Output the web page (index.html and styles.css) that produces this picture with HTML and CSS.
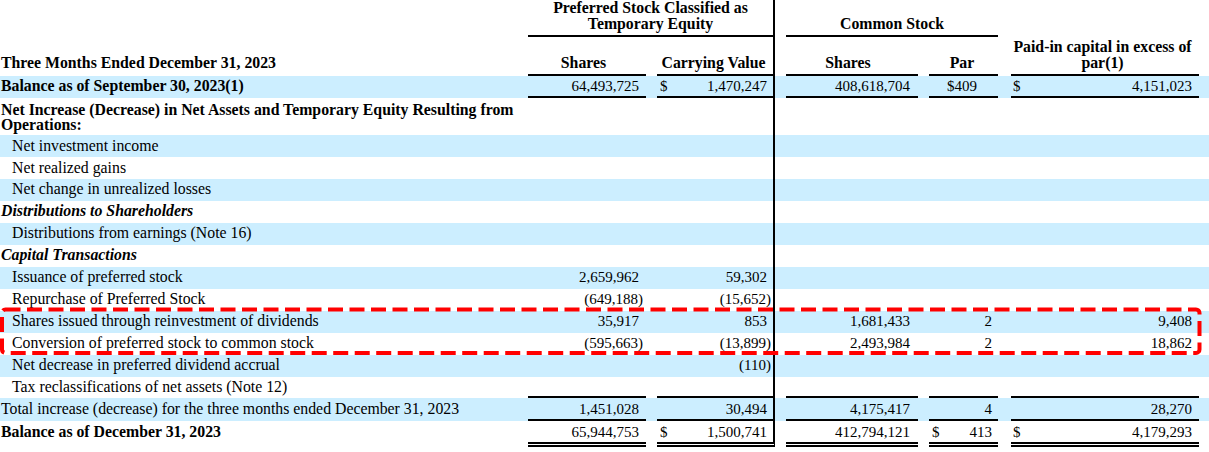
FILE: index.html
```html
<!DOCTYPE html>
<html lang="en">
<head>
<meta charset="utf-8">
<title>Statement of Changes in Net Assets</title>
<link rel="stylesheet" href="styles.css">
</head>
<body>
<div class="sheet">
  <div class="row hrow1">
    <div class="lbl"></div>
    <div class="h pref">Preferred Stock Classified as<br>Temporary Equity</div>
    <div class="h cs">Common Stock</div>
    <div class="c5 blank"></div>
  </div>
  <div class="row hrow2">
    <div class="h lbl hl-lbl">Three Months Ended December 31, 2023</div>
    <div class="h c1 ul">Shares</div>
    <div class="h c2 ul">Carrying Value</div>
    <div class="h c3 ul">Shares</div>
    <div class="h c4 ul">Par</div>
    <div class="h c5 ul">Paid-in capital in excess of<br>par(1)</div>
  </div>

  <div class="row alt">
    <div class="lbl b">Balance as of September 30, 2023(1)</div>
    <div class="c1 ul">64,493,725</div>
    <div class="c2 ul dol"><span>$</span><span>1,470,247</span></div>
    <div class="c3 ul">408,618,704</div>
    <div class="c4 ul ctr">$409</div>
    <div class="c5 ul dol"><span>$</span><span>4,151,023</span></div>
  </div>
  <div class="row">
    <div class="lbl b two">Net Increase (Decrease) in Net Assets and Temporary Equity Resulting from Operations:</div>
    <div class="c1"></div><div class="c2"></div><div class="c3"></div><div class="c4"></div><div class="c5"></div>
  </div>
  <div class="row alt">
    <div class="lbl ind">Net investment income</div>
    <div class="c1"></div><div class="c2"></div><div class="c3"></div><div class="c4"></div><div class="c5"></div>
  </div>
  <div class="row">
    <div class="lbl ind">Net realized gains</div>
    <div class="c1"></div><div class="c2"></div><div class="c3"></div><div class="c4"></div><div class="c5"></div>
  </div>
  <div class="row alt">
    <div class="lbl ind">Net change in unrealized losses</div>
    <div class="c1"></div><div class="c2"></div><div class="c3"></div><div class="c4"></div><div class="c5"></div>
  </div>
  <div class="row">
    <div class="lbl bi">Distributions to Shareholders</div>
    <div class="c1"></div><div class="c2"></div><div class="c3"></div><div class="c4"></div><div class="c5"></div>
  </div>
  <div class="row alt">
    <div class="lbl ind">Distributions from earnings (Note 16)</div>
    <div class="c1"></div><div class="c2"></div><div class="c3"></div><div class="c4"></div><div class="c5"></div>
  </div>
  <div class="row">
    <div class="lbl bi">Capital Transactions</div>
    <div class="c1"></div><div class="c2"></div><div class="c3"></div><div class="c4"></div><div class="c5"></div>
  </div>
  <div class="row alt">
    <div class="lbl ind">Issuance of preferred stock</div>
    <div class="c1">2,659,962</div>
    <div class="c2">59,302</div>
    <div class="c3"></div><div class="c4"></div><div class="c5"></div>
  </div>
  <div class="row">
    <div class="lbl ind">Repurchase of Preferred Stock</div>
    <div class="c1"><span class="neg">(649,188)</span></div>
    <div class="c2"><span class="neg">(15,652)</span></div>
    <div class="c3"></div><div class="c4"></div><div class="c5"></div>
  </div>

  <div class="highlight">
    <div class="row alt">
      <div class="lbl ind">Shares issued through reinvestment of dividends</div>
      <div class="c1">35,917</div>
      <div class="c2">853</div>
      <div class="c3">1,681,433</div>
      <div class="c4">2</div>
      <div class="c5">9,408</div>
    </div>
    <div class="row">
      <div class="lbl ind">Conversion of preferred stock to common stock</div>
      <div class="c1"><span class="neg">(595,663)</span></div>
      <div class="c2"><span class="neg">(13,899)</span></div>
      <div class="c3">2,493,984</div>
      <div class="c4">2</div>
      <div class="c5">18,862</div>
    </div>
    <svg class="hl-box" width="1209" height="58" viewBox="0 0 1209 58" aria-hidden="true">
      <rect x="2" y="4.4" width="1197.5" height="43.5" rx="3.5" ry="3.5" fill="none" stroke="#ff0000" stroke-width="4" stroke-dasharray="15 6.5"/>
    </svg>
  </div>

  <div class="row alt">
    <div class="lbl ind">Net decrease in preferred dividend accrual</div>
    <div class="c1"></div>
    <div class="c2"><span class="neg">(110)</span></div>
    <div class="c3"></div><div class="c4"></div><div class="c5"></div>
  </div>
  <div class="row">
    <div class="lbl ind">Tax reclassifications of net assets (Note 12)</div>
    <div class="c1 ul"></div><div class="c2 ul"></div><div class="c3 ul"></div><div class="c4 ul"></div><div class="c5 ul"></div>
  </div>
  <div class="row alt">
    <div class="lbl">Total increase (decrease) for the three months ended December 31, 2023</div>
    <div class="c1 ul">1,451,028</div>
    <div class="c2 ul">30,494</div>
    <div class="c3 ul">4,175,417</div>
    <div class="c4 ul">4</div>
    <div class="c5 ul">28,270</div>
  </div>
  <div class="row">
    <div class="lbl b">Balance as of December 31, 2023</div>
    <div class="c1 dul">65,944,753</div>
    <div class="c2 dul dol"><span>$</span><span>1,500,741</span></div>
    <div class="c3 dul">412,794,121</div>
    <div class="c4 dul dol"><span>$</span><span>413</span></div>
    <div class="c5 dul dol"><span>$</span><span>4,179,293</span></div>
  </div>
</div>
</body>
</html>
```

FILE: styles.css
```css
* {
  box-sizing: border-box;
}

html,
body {
  margin: 0;
  padding: 0;
  background: #ffffff;
}

body {
  font-family: "Liberation Serif", "Times New Roman", serif;
  color: #000000;
}

.sheet {
  width: 1209px;
}

.row {
  display: grid;
  grid-template-columns: 528px 118px 129px 143px 80px 201px 1fr;
  font-size: 15.8px;
  line-height: 14.6px;
}

.row.alt {
  background: #cceeff;
}

/* label column */
.lbl {
  padding: 3.7px 0 3.7px 1px;
}

.lbl.ind {
  padding-left: 12px;
}

.lbl.two {
  line-height: 15px;
  padding-top: 3.3px;
  padding-bottom: 3.3px;
}

.b {
  font-weight: bold;
}

.bi {
  font-weight: bold;
  font-style: italic;
}

/* numeric columns */
.c1,
.c2,
.c3,
.c4,
.c5 {
  font-size: 15px;
  text-align: right;
  white-space: nowrap;
}

.c1 {
  padding: 3.7px 7px 3.7px 0;
}

.c2 {
  margin-left: 11px;
  border-right: 2px solid #000000;
  padding: 3.7px 6px 3.7px 3px;
}

.c3 {
  margin-left: 11px;
  padding: 3.7px 8px 3.7px 0;
}

.c4 {
  margin-left: 11px;
  padding: 3.7px 6px 3.7px 3px;
}

.c5 {
  margin-left: 13px;
  padding: 3.7px 7px 3.7px 2px;
}

.ul {
  border-bottom: 2px solid #000000;
  padding-bottom: 2.4px;
}

.dul {
  border-bottom: 5px double #000000;
  padding-bottom: 2.4px;
}

.dol {
  display: flex;
  justify-content: space-between;
  align-items: baseline;
}

.ctr {
  text-align: center;
}

.neg {
  margin-right: -4px;
}

/* header rows */
.h {
  font-size: 15.8px;
  font-weight: bold;
  line-height: 15.5px;
  display: flex;
  flex-direction: column;
  justify-content: flex-end;
  align-items: center;
  text-align: center;
  white-space: normal;
}

.hrow1 .pref {
  grid-column: 2 / 4;
  border-right: 2px solid #000000;
  border-bottom: 2px solid #000000;
  padding: 0 0 3.6px 0;
}

.hrow1 .cs {
  grid-column: 4 / 6;
  margin-left: 11px;
  border-bottom: 2px solid #000000;
  padding: 0 0 3.6px 0;
}

.hrow1 .blank {
  padding: 0;
}

.hrow2 {
  min-height: 39px;
}

.hrow2 .h {
  padding-top: 0;
  padding-bottom: 3.4px;
}

.hrow2 .hl-lbl {
  align-items: flex-start;
  text-align: left;
  padding-left: 1px;
  padding-bottom: 5.4px;
}

/* red dashed highlight overlay */
.highlight {
  position: relative;
}

.hl-box {
  position: absolute;
  left: 0;
  top: -6px;
  pointer-events: none;
}
```
